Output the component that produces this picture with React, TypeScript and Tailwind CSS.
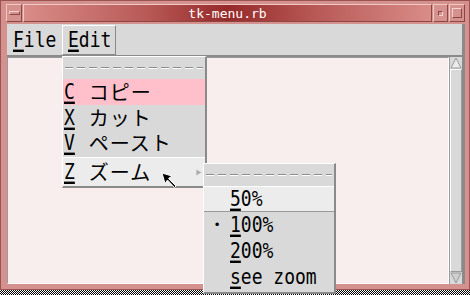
import React from "react";

const Tearoff = ({ className = "" }: { className?: string }) => (
  <div className={"flex flex-col justify-center px-[2px] " + className}>
    <div className="h-px bg-[repeating-linear-gradient(90deg,#8c8c8c_0_8px,transparent_8px_12px)]" />
    <div className="h-px bg-[repeating-linear-gradient(90deg,#ffffff_0_8px,transparent_8px_12px)]" />
  </div>
);

// latin label in a tall X11-ish mono face; first char underlined
const L = ({ u, rest }: { u: string; rest: string }) => (
  <span className="inline-block scale-y-120 whitespace-pre leading-none">
    <span className="underline decoration-2 underline-offset-[2px]">{u}</span>
    {rest}
  </span>
);

const Jp = ({ children }: { children: React.ReactNode }) => (
  <span className="inline-block h-[20px] overflow-visible font-['Noto_Sans_CJK_JP',sans-serif] text-[20px] leading-[20px] tracking-[1px]">{children}</span>
);

function Cursor() {
  return (
    <svg className="absolute left-[161px] top-[172px]" width="18" height="17" viewBox="0 0 18 17">
      <path d="M1 1 L11 4 L7.5 6.5 L15 14 L13.5 15.5 L6.5 8 L4 11.5 Z" fill="#000" stroke="#fff" strokeWidth="1" />
    </svg>
  );
}

export default function App() {
  return (
    <div className="relative w-[470px] h-[295px] overflow-hidden bg-[repeating-conic-gradient(#000_0%_25%,#fff_0%_50%)] bg-size-[2px_2px] font-['DejaVu_Sans_Mono',monospace] text-black">
      {/* window frame */}
      <div className="h-[290px] flex flex-col bg-[#d4918d] border border-[#9a5552] pl-[5px] pr-[4px] pt-[3px]">
        {/* title bar */}
        <div className="flex h-[18px] gap-[1px]">
          <div className="w-[16px] h-[18px] flex items-center justify-center border border-t-[#f0c8c4] border-l-[#f0c8c4] border-b-[#8a4744] border-r-[#8a4744]">
            <div className="w-[11px] h-[4px] border border-t-[#f4d2ce] border-l-[#f4d2ce] border-b-[#8a4744] border-r-[#8a4744]" />
          </div>
          <div className="flex-1 h-[18px] flex items-center justify-center border border-t-[#f0c8c4] border-l-[#f0c8c4] border-b-[#8a4744] border-r-[#8a4744] bg-[linear-gradient(90deg,#d98c88_0%,#b85a57_30%,#962a2a_50%,#b85a57_72%,#d98c88_100%)]">
            <span className="text-white text-[13px] leading-none">tk-menu.rb</span>
          </div>
          <div className="w-[15px] h-[18px] flex items-center justify-center border border-t-[#f0c8c4] border-l-[#f0c8c4] border-b-[#8a4744] border-r-[#8a4744]">
            <div className="w-[5px] h-[5px] border border-t-[#8a4744] border-l-[#8a4744] border-b-[#f4d2ce] border-r-[#f4d2ce]" />
          </div>
          <div className="w-[16px] h-[18px] flex items-center justify-center border border-t-[#f0c8c4] border-l-[#f0c8c4] border-b-[#8a4744] border-r-[#8a4744]">
            <div className="w-[10px] h-[10px] border border-t-[#f4d2ce] border-l-[#f4d2ce] border-b-[#8a4744] border-r-[#8a4744]" />
          </div>
        </div>

        {/* client area */}
        <div className="mt-[2px] ml-[1px] flex-1 flex flex-col bg-[#d9d9d9] border-r-[3px] border-r-[#8a8a8a] mb-[5px]">
          {/* menubar */}
          <div className="h-[33px] flex items-center border-b-2 border-b-[#8a8a8a] pl-[1px] text-[18px]">
            <div className="w-[54px] h-[30px] flex items-center pl-[5px]">
              <L u="F" rest="ile" />
            </div>
            <div className="w-[54px] h-[30px] flex items-center pl-[5px] border border-t-white border-l-white border-b-[#8a8a8a] border-r-[#8a8a8a]">
              <L u="E" rest="dit" />
            </div>
          </div>
          {/* text + scrollbar */}
          <div className="flex-1 flex">
            <div className="flex-1 bg-[#f8eeee] border border-t-[#9a9a9a] border-l-[#9a9a9a] border-b-white border-r-white" />
            <div className="w-[13px] flex flex-col bg-[#d9d9d9] border-l border-l-[#9a9a9a]">
              <svg width="12" height="12" viewBox="0 0 12 12">
                <path d="M6 1 L11 11 L1 11 Z" fill="#ececec" stroke="#9a9a9a" strokeWidth="1" />
              </svg>
              <div className="flex-1 border border-t-white border-l-white border-b-[#9a9a9a] border-r-[#9a9a9a]" />
              <svg width="12" height="12" viewBox="0 0 12 12">
                <path d="M1 1 L11 1 L6 11 Z" fill="#cfcfcf" stroke="#9a9a9a" strokeWidth="1" />
              </svg>
            </div>
          </div>
        </div>
      </div>

      {/* Edit menu */}
      <div className="absolute left-[62px] top-[56px] w-[145px] h-[132px] flex flex-col bg-[#d9d9d9] border-t border-l border-t-white border-l-white border-r-2 border-b-2 border-r-[#8a8a8a] border-b-[#8a8a8a] text-[18px]">
        <Tearoff className="h-[22px]" />
        <div className="h-[26px] flex items-center bg-[#ffc0cb] pl-[1px] gap-[14px]">
          <L u="C" rest="" />
          <Jp>コピー</Jp>
        </div>
        <div className="h-[25px] flex items-center pl-[1px] gap-[14px]">
          <L u="X" rest="" />
          <Jp>カット</Jp>
        </div>
        <div className="h-[25px] flex items-center pl-[1px] gap-[14px]">
          <L u="V" rest="" />
          <Jp>ペースト</Jp>
        </div>
        <div className="flex-1 flex items-center pl-[1px] gap-[14px] bg-[#ececec] border-t border-t-white mt-[2px]">
          <L u="Z" rest="" />
          <Jp>ズーム</Jp>
          <svg className="ml-auto mr-[2px]" width="8" height="9" viewBox="0 0 8 9">
            <path d="M1 1 L7 4.5 L1 8 Z" fill="#a8a8a8" stroke="#e8e8e8" strokeWidth="1" />
          </svg>
        </div>
      </div>

      <Cursor />

      {/* Zoom submenu */}
      <div className="absolute left-[203px] top-[163px] w-[133px] h-[131px] flex flex-col bg-[#d9d9d9] border-t border-l border-t-white border-l-white border-r-2 border-b-2 border-r-[#8a8a8a] border-b-[#8a8a8a] text-[18px]">
        <Tearoff className="h-[22px]" />
        <div className="h-[26px] flex items-center pl-[26px] bg-[#ececec] border-t border-t-white border-b border-b-[#9a9a9a]">
          <L u="5" rest="0%" />
        </div>
        <div className="h-[26px] flex items-center">
          <span className="w-[26px] flex justify-center text-[12px] leading-none">•</span>
          <L u="1" rest="00%" />
        </div>
        <div className="h-[26px] flex items-center pl-[26px]">
          <L u="2" rest="00%" />
        </div>
        <div className="h-[26px] flex items-center pl-[26px]">
          <L u="s" rest="ee zoom" />
        </div>
      </div>
    </div>
  );
}
